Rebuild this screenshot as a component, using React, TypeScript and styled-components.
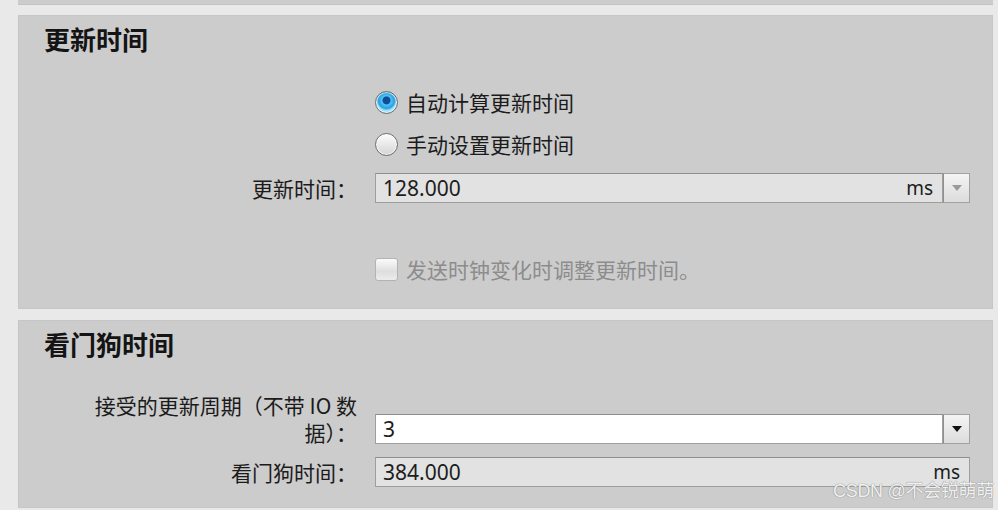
import React from "react";
import styled, { createGlobalStyle } from "styled-components";

const Global = createGlobalStyle`
  html, body { margin: 0; padding: 0; }
  body {
    background: #e9e9e9;
    font-family: "Noto Sans", "Noto Sans CJK SC", sans-serif;
    color: #1b1b1b;
    width: 998px;
    height: 510px;
    overflow: hidden;
  }
`;

const Page = styled.div`
  position: relative;
  width: 998px;
  height: 510px;
  display: flex;
  flex-direction: column;
  padding-left: 18px;
  box-sizing: border-box;
`;

const Stub = styled.div`
  width: 975px;
  height: 5px;
  background: #cccccc;
  border-bottom: 1px solid #c3c3c3;
  box-sizing: border-box;
`;

const Panel = styled.section<{ $top: number; $height: number }>`
  width: 975px;
  height: ${(p) => p.$height}px;
  margin-top: ${(p) => p.$top}px;
  background: #cccccc;
  border: 1px solid #c6c6c6;
  box-sizing: border-box;
  display: flex;
  flex-direction: column;
`;

const Heading = styled.h2<{ $pt: number }>`
  margin: 0;
  padding: ${(p) => p.$pt}px 0 0 25px;
  font-family: "Noto Sans CJK SC", sans-serif;
  font-weight: 700;
  font-size: 26px;
  line-height: 30px;
  color: #141414;
`;

const Form = styled.div<{ $mt: number }>`
  display: grid;
  grid-template-columns: 338px 595px;
  column-gap: 18px;
  margin-top: ${(p) => p.$mt}px;
`;

const Label = styled.div<{ $mt?: number; $w?: number }>`
  grid-column: 1;
  justify-self: end;
  align-self: ${(p) => (p.$w ? "end" : "center")};
  text-align: right;
  font-family: "Noto Sans CJK SC", sans-serif;
  font-size: 21px;
  line-height: 27px;
  color: #1b1b1b;
  margin-top: ${(p) => p.$mt ?? 0}px;
  ${(p) => (p.$w ? `width: ${p.$w}px;` : "")}
`;

const Control = styled.div<{ $mt?: number; $end?: boolean }>`
  grid-column: 2;
  margin-top: ${(p) => p.$mt ?? 0}px;
  align-self: ${(p) => (p.$end ? "end" : "center")};
  margin-bottom: ${(p) => (p.$end ? 2 : 0)}px;
  display: flex;
  align-items: center;
`;

const OptionLine = styled.label<{ $disabled?: boolean }>`
  display: flex;
  align-items: center;
  gap: 8px;
  height: 30px;
  font-family: "Noto Sans CJK SC", sans-serif;
  font-size: 21px;
  color: ${(p) => (p.$disabled ? "#8c8c8c" : "#1b1b1b")};
`;

const RadioDot = styled.span<{ $checked?: boolean }>`
  width: 23px;
  height: 23px;
  border-radius: 50%;
  box-sizing: border-box;
  border: 1px solid #6e6e6e;
  background: ${(p) =>
    p.$checked
      ? "radial-gradient(circle at 50% 40%, #0c4d9c 0 3.5px, #53c4f2 4.5px, #2a9ee0 8px, #9fe3fa 10px)"
      : "linear-gradient(#fdfdfd, #d4d4d4)"};
  box-shadow: inset 0 0 0 1px rgba(255, 255, 255, 0.7);
`;

const Check = styled.span`
  width: 23px;
  height: 23px;
  border-radius: 3px;
  box-sizing: border-box;
  border: 1px solid #b3b3b3;
  background: linear-gradient(#fbfbfb, #dedede 60%, #ececec);
`;

const Field = styled.div<{ $white?: boolean }>`
  flex: 1;
  height: 30px;
  box-sizing: border-box;
  border: 1px solid #9e9e9e;
  border-top-color: #8e8e8e;
  background: ${(p) => (p.$white ? "#ffffff" : "#e2e2e2")};
  display: flex;
  align-items: center;
  justify-content: space-between;
  padding: 0 9px 0 7px;
  font-family: "Noto Sans", "Noto Sans CJK SC", sans-serif;
  font-size: 21px;
  color: #1d1d1d;
`;

const Unit = styled.span`
  font-size: 19px;
  color: #1d1d1d;
`;

const DropButton = styled.div<{ $active?: boolean }>`
  width: 27px;
  height: 30px;
  box-sizing: border-box;
  border: 1px solid #a2a2a2;
  border-left: 1px solid #8f8f8f;
  background: linear-gradient(#f4f4f4, #dcdcdc);
  display: flex;
  align-items: center;
  justify-content: center;
  &::after {
    content: "";
    width: 0;
    height: 0;
    border-left: 5px solid transparent;
    border-right: 5px solid transparent;
    border-top: 6px solid ${(p) => (p.$active ? "#111" : "#9a9a9a")};
  }
`;

const Watermark = styled.div`
  position: absolute;
  right: 4px;
  bottom: 8px;
  font-family: "Liberation Sans", "Noto Sans CJK SC", sans-serif;
  font-size: 18px;
  color: rgba(255, 255, 255, 0.9);
  text-shadow: 0 0 1px #8a8a8a, 0 0 1px #8a8a8a;
  letter-spacing: -0.3px;
`;

export default function App() {
  return (
    <>
      <Global />
      <Page>
        <Stub />
        <Panel $top={10} $height={294}>
          <Heading $pt={8}>更新时间</Heading>
          <Form $mt={33}>
            <Control>
              <OptionLine>
                <RadioDot $checked />
                自动计算更新时间
              </OptionLine>
            </Control>
            <Control $mt={12}>
              <OptionLine>
                <RadioDot />
                手动设置更新时间
              </OptionLine>
            </Control>
            <Label $mt={14}>更新时间：</Label>
            <Control $mt={14}>
              <Field>
                <span>128.000</span>
                <Unit>ms</Unit>
              </Field>
              <DropButton />
            </Control>
            <Control $mt={51}>
              <OptionLine $disabled>
                <Check />
                发送时钟变化时调整更新时间。
              </OptionLine>
            </Control>
          </Form>
        </Panel>
        <Panel $top={11} $height={188}>
          <Heading $pt={8}>看门狗时间</Heading>
          <Form $mt={33}>
            <Label $w={278}>接受的更新周期（不带 IO 数据）：</Label>
            <Control $end>
              <Field $white>
                <span>3</span>
              </Field>
              <DropButton $active />
            </Control>
            <Label $mt={11}>看门狗时间：</Label>
            <Control $mt={11}>
              <Field>
                <span>384.000</span>
                <Unit>ms</Unit>
              </Field>
            </Control>
          </Form>
        </Panel>
        <Watermark>CSDN @不会锐萌萌</Watermark>
      </Page>
    </>
  );
}
